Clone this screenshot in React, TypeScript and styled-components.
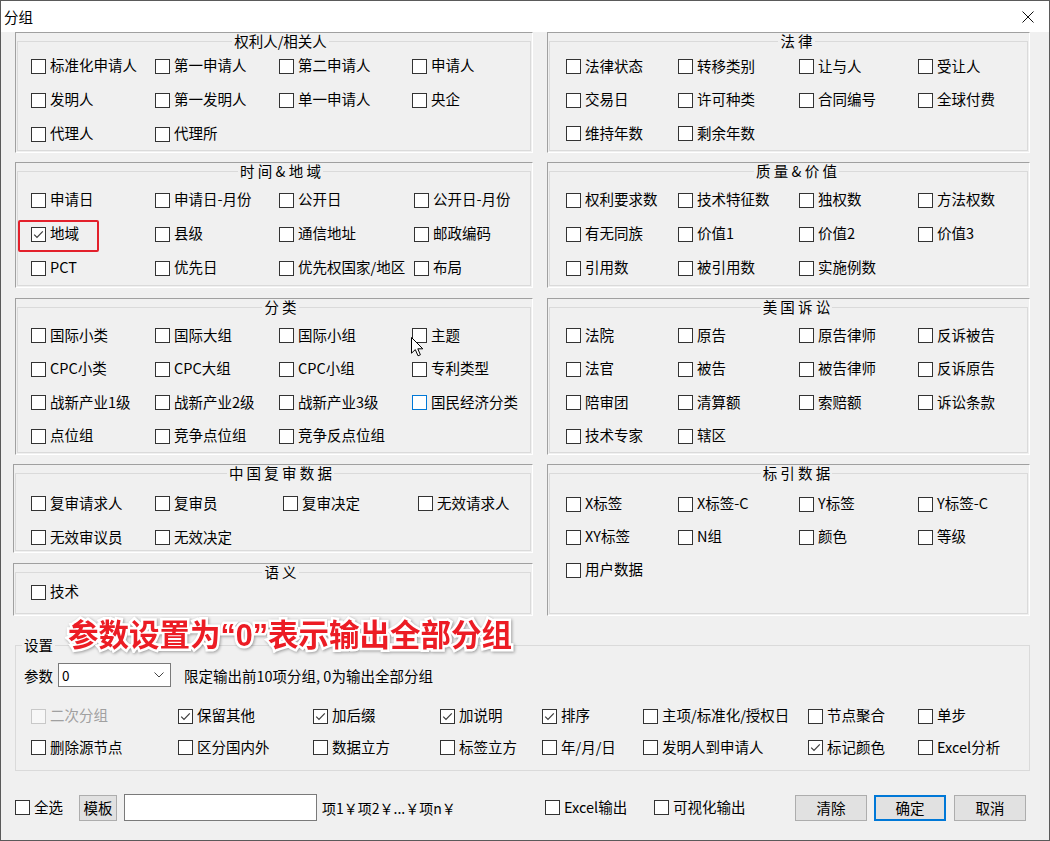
import React from "react";
import styled, { createGlobalStyle, css } from "styled-components";

const FONT = `"Noto Sans CJK SC", "Noto Sans", sans-serif`;

const GlobalStyle = createGlobalStyle`
  html, body { margin: 0; padding: 0; background: #f0f0f0; }
  body { font-family: ${FONT}; font-size: 14.5px; color: #000; }
  * { box-sizing: border-box; }
`;

const Window = styled.div`
  width: 1050px;
  height: 841px;
  border: 1px solid #5a5a5a;
  background: #f0f0f0;
  overflow: hidden;
`;

const TitleBar = styled.div`
  height: 31px;
  background: #fff;
  display: flex;
  align-items: center;
  justify-content: space-between;
  padding: 0 15px 0 3px;
`;

const TitleText = styled.span`
  font-size: 14.5px;
  line-height: 31px;
`;

const CloseButton = styled.span`
  display: flex;
  width: 12px;
  height: 12px;
  margin-top: 1px;
`;

const Columns = styled.div`
  display: grid;
  grid-template-columns: 518px 483px;
  column-gap: 14px;
  padding-left: 14px;
  align-items: start;
`;

const Column = styled.div`
  display: flex;
  flex-direction: column;
`;

const Panel = styled.div<{ $h: number; $mt: number; $shift?: number }>`
  height: ${(p) => p.$h}px;
  margin-top: ${(p) => p.$mt}px;
  margin-left: ${(p) => p.$shift ?? 0}px;
  border-top: 1px solid #a0a0a0;
  border-left: 1px solid #a0a0a0;
  border-right: 1px solid #fff;
  border-bottom: 1px solid #fff;
  padding: 0 1px 1px 1px;
`;

const Frame = styled.fieldset<{ $pt: number; $pl: number }>`
  margin: 0;
  height: 100%;
  min-width: 0;
  border: 1px solid #dadada;
  padding: ${(p) => p.$pt}px 0 0 ${(p) => p.$pl}px;
`;

const Legend = styled.legend`
  margin: 0 auto;
  padding: 0 2px;
  font-size: 14.5px;
  line-height: 16px;
  white-space: pre;
`;

const Grid = styled.div<{ $cols: string; $gap: number }>`
  display: grid;
  grid-template-columns: ${(p) => p.$cols};
  grid-auto-rows: 22px;
  row-gap: ${(p) => p.$gap}px;
`;

const Item = styled.label<{ $hl?: boolean; $disabled?: boolean }>`
  position: relative;
  display: flex;
  align-items: center;
  height: 22px;
  white-space: nowrap;
  color: ${(p) => (p.$disabled ? "#a0a0a0" : "#000")};
  ${(p) =>
    p.$hl &&
    css`
      &::after {
        content: "";
        position: absolute;
        left: -13px;
        top: -3px;
        width: 77px;
        height: 28px;
        border: 2px solid #e3202b;
        border-radius: 2px;
      }
    `}
`;

const Box = styled.span<{ $focus?: boolean; $disabled?: boolean }>`
  flex: none;
  width: 15px;
  height: 15px;
  border: 1px solid
    ${(p) => (p.$disabled ? "#c8c8c8" : p.$focus ? "#0078d7" : "#333")};
  background: ${(p) => (p.$disabled ? "#f7f7f7" : "#fff")};
  display: flex;
  align-items: center;
  justify-content: center;
`;

const LabelText = styled.span`
  margin-left: 4px;
  padding-bottom: 2px;
  font-size: 14.5px;
  line-height: 22px;
`;

const Cursor = styled.svg`
  position: absolute;
  left: -1px;
  top: 12px;
  width: 13px;
  height: 20px;
  pointer-events: none;
`;

type ItemDef = {
  label: string;
  checked?: boolean;
  focus?: boolean;
  highlight?: boolean;
  cursor?: boolean;
  disabled?: boolean;
};

const Check: React.FC<ItemDef> = ({ label, checked, focus, highlight, cursor, disabled }) => (
  <Item $hl={highlight} $disabled={disabled}>
    <Box $focus={focus} $disabled={disabled}>
      {checked && (
        <svg width="13" height="13" viewBox="0 0 13 13">
          <path d="M2.2 6.6 L5 9.4 L10.8 3.4" fill="none" stroke="#3c3c3c" strokeWidth="1.2" />
        </svg>
      )}
    </Box>
    <LabelText>{label}</LabelText>
    {cursor && (
      <Cursor viewBox="0 0 13 20">
        <path
          d="M0.5 0.5 L0.5 16.2 L4.3 12.6 L7 18.8 L9.4 17.8 L6.8 11.8 L11.8 11.8 Z"
          fill="#fff"
          stroke="#000"
          strokeWidth="1"
          strokeLinejoin="round"
        />
      </Cursor>
    )}
  </Item>
);

type GroupDef = {
  title: string;
  h: number;
  mt: number;
  pt: number;
  gap: number;
  cols: string;
  shift?: number;
  pl?: number;
  items: ItemDef[];
};

const L = (label: string, extra: Partial<ItemDef> = {}): ItemDef => ({ label, ...extra });

const LEFT_PL = 13;
const RIGHT_PL = 16;
const RIGHT_COLS = "112px 121px 119px 1fr";

const leftGroups: GroupDef[] = [
  {
    title: "权利人/相关人",
    h: 121,
    mt: 0,
    pt: 6,
    gap: 12,
    cols: "124px 124px 133px 1fr",
    items: ["标准化申请人", "第一申请人", "第二申请人", "申请人", "发明人", "第一发明人", "单一申请人", "央企", "代理人", "代理所"].map((s) => L(s)),
  },
  {
    title: "时 间 & 地 域",
    h: 126,
    mt: 9,
    pt: 10,
    gap: 12,
    cols: "124px 124px 135px 1fr",
    items: [
      L("申请日"),
      L("申请日-月份"),
      L("公开日"),
      L("公开日-月份"),
      L("地域", { checked: true, highlight: true }),
      L("县级"),
      L("通信地址"),
      L("邮政编码"),
      L("PCT"),
      L("优先日"),
      L("优先权国家/地区"),
      L("布局"),
    ],
  },
  {
    title: "分 类",
    h: 157,
    mt: 10,
    pt: 9.5,
    gap: 11.5,
    cols: "124px 124px 133px 1fr",
    items: [
      L("国际小类"),
      L("国际大组"),
      L("国际小组"),
      L("主题", { cursor: true }),
      L("CPC小类"),
      L("CPC大组"),
      L("CPC小组"),
      L("专利类型"),
      L("战新产业1级"),
      L("战新产业2级"),
      L("战新产业3级"),
      L("国民经济分类", { focus: true }),
      L("点位组"),
      L("竞争点位组"),
      L("竞争反点位组"),
    ],
  },
  {
    title: "中 国 复 审 数 据",
    h: 89,
    mt: 9,
    pt: 11.5,
    gap: 12,
    shift: -2,
    pl: 15,
    cols: "124px 128px 135px 1fr",
    items: ["复审请求人", "复审员", "复审决定", "无效请求人", "无效审议员", "无效决定"].map((s) => L(s)),
  },
  {
    title: "语 义",
    h: 53,
    mt: 10,
    pt: 1,
    gap: 12,
    shift: -2,
    pl: 15,
    cols: "124px 1fr",
    items: [L("技术")],
  },
];

const rightGroups: GroupDef[] = [
  {
    title: "法 律",
    h: 121,
    mt: 0,
    pt: 6.5,
    gap: 11.5,
    cols: RIGHT_COLS,
    items: ["法律状态", "转移类别", "让与人", "受让人", "交易日", "许可种类", "合同编号", "全球付费", "维持年数", "剩余年数"].map((s) => L(s)),
  },
  {
    title: "质 量 & 价 值",
    h: 126,
    mt: 9,
    pt: 10,
    gap: 12,
    cols: RIGHT_COLS,
    items: ["权利要求数", "技术特征数", "独权数", "方法权数", "有无同族", "价值1", "价值2", "价值3", "引用数", "被引用数", "实施例数"].map((s) => L(s)),
  },
  {
    title: "美 国 诉 讼",
    h: 157,
    mt: 10,
    pt: 9.5,
    gap: 11.5,
    cols: RIGHT_COLS,
    items: ["法院", "原告", "原告律师", "反诉被告", "法官", "被告", "被告律师", "反诉原告", "陪审团", "清算额", "索赔额", "诉讼条款", "技术专家", "辖区"].map((s) => L(s)),
  },
  {
    title: "标 引 数 据",
    h: 152,
    mt: 9,
    pt: 12,
    gap: 11,
    cols: RIGHT_COLS,
    items: ["X标签", "X标签-C", "Y标签", "Y标签-C", "XY标签", "N组", "颜色", "等级", "用户数据"].map((s) => L(s)),
  },
];

const Group: React.FC<{ g: GroupDef; pl: number }> = ({ g, pl }) => (
  <Panel $h={g.h} $mt={g.mt} $shift={g.shift}>
    <Frame $pt={g.pt} $pl={g.pl ?? pl}>
      <Legend>{g.title}</Legend>
      <Grid $cols={g.cols} $gap={g.gap}>
        {g.items.map((it) => (
          <Check key={it.label} {...it} />
        ))}
      </Grid>
    </Frame>
  </Panel>
);

/* ---------- settings ---------- */

const SettingsArea = styled.div`
  position: relative;
  margin: 21px 0 0 14px;
  width: 1015px;
`;

const Annotation = styled.div`
  position: absolute;
  left: 53px;
  top: -20px;
  font-family: "Liberation Sans", "Noto Sans CJK SC", sans-serif;
  font-weight: bold;
  font-size: 30.5px;
  line-height: 36px;
  color: #ec1c24;
  white-space: nowrap;
  -webkit-text-stroke: 5px #fff;
  paint-order: stroke fill;
  filter: drop-shadow(1px 1px 1.5px rgba(0, 0, 0, 0.35));
  z-index: 2;
`;

const SettingsFrame = styled.fieldset`
  margin: 0;
  height: 134px;
  min-width: 0;
  border: 1px solid #dadada;
  padding: 10px 0 0 8px;
`;

const SettingsLegend = styled.legend`
  margin-left: -2px;
  padding: 0 2px;
  font-size: 14.5px;
  line-height: 16px;
`;

const ParamRow = styled.div`
  display: flex;
  align-items: center;
  height: 24px;
`;

const Combo = styled.div`
  display: flex;
  align-items: center;
  justify-content: space-between;
  width: 113px;
  height: 24px;
  margin-left: 5px;
  border: 1px solid #7a7a7a;
  background: #fff;
  padding: 0 6px 0 3px;
  font-size: 13.5px;
`;

const Desc = styled.span`
  margin-left: 13px;
  white-space: nowrap;
`;

const OptionsGrid = styled.div`
  display: grid;
  margin: 18px 0 0 7px;
  grid-template-columns: 147px 135px 127px 102px 101px 165px 110px auto;
  grid-auto-rows: 22px;
  row-gap: 9.5px;
`;

const options: ItemDef[] = [
  L("二次分组", { disabled: true }),
  L("保留其他", { checked: true }),
  L("加后缀", { checked: true }),
  L("加说明", { checked: true }),
  L("排序", { checked: true }),
  L("主项/标准化/授权日"),
  L("节点聚合"),
  L("单步"),
  L("删除源节点"),
  L("区分国内外"),
  L("数据立方"),
  L("标签立方"),
  L("年/月/日"),
  L("发明人到申请人"),
  L("标记颜色", { checked: true }),
  L("Excel分析"),
];

/* ---------- bottom bar ---------- */

const BottomBar = styled.div`
  display: grid;
  grid-template-columns: 64px 45px 198px 223px 109px 141px 79px 80px 72px;
  align-items: center;
  height: 27px;
  margin-top: 23px;
  padding-left: 14px;
`;

const Button = styled.button<{ $primary?: boolean; $w: number }>`
  width: ${(p) => p.$w}px;
  height: 26px;
  margin: 0;
  padding: 0;
  background: #e1e1e1;
  border: ${(p) => (p.$primary ? "2px solid #0078d7" : "1px solid #adadad")};
  font-family: ${FONT};
  font-size: 14.5px;
  color: #000;
`;

const TextInput = styled.div`
  width: 193px;
  height: 27px;
  border: 1px solid #7a7a7a;
  background: #fff;
`;

const Hint = styled.span`
  white-space: nowrap;
  font-size: 14px;
`;

export default function App() {
  return (
    <>
      <GlobalStyle />
      <Window>
        <TitleBar>
          <TitleText>分组</TitleText>
          <CloseButton>
            <svg width="12" height="12" viewBox="0 0 12 12">
              <path d="M0.5 0.5 L11.5 11.5 M11.5 0.5 L0.5 11.5" stroke="#111" strokeWidth="1" />
            </svg>
          </CloseButton>
        </TitleBar>

        <Columns>
          <Column>
            {leftGroups.map((g) => (
              <Group key={g.title} g={g} pl={LEFT_PL} />
            ))}
          </Column>
          <Column>
            {rightGroups.map((g) => (
              <Group key={g.title} g={g} pl={RIGHT_PL} />
            ))}
          </Column>
        </Columns>

        <SettingsArea>
          <Annotation>参数设置为“0”表示输出全部分组</Annotation>
          <SettingsFrame>
            <SettingsLegend>设置</SettingsLegend>
            <ParamRow>
              <span>参数</span>
              <Combo>
                <span>0</span>
                <svg width="10" height="6" viewBox="0 0 10 6">
                  <path d="M0.5 0.5 L5 5 L9.5 0.5" fill="none" stroke="#444" strokeWidth="1" />
                </svg>
              </Combo>
              <Desc>限定输出前10项分组, 0为输出全部分组</Desc>
            </ParamRow>
            <OptionsGrid>
              {options.map((o) => (
                <Check key={o.label} {...o} />
              ))}
            </OptionsGrid>
          </SettingsFrame>
        </SettingsArea>

        <BottomBar>
          <Check label="全选" />
          <Button $w={38}>模板</Button>
          <TextInput />
          <Hint>项1￥项2￥...￥项n￥</Hint>
          <Check label="Excel输出" />
          <Check label="可视化输出" />
          <Button $w={72}>清除</Button>
          <Button $w={72} $primary>
            确定
          </Button>
          <Button $w={72}>取消</Button>
        </BottomBar>
      </Window>
    </>
  );
}
